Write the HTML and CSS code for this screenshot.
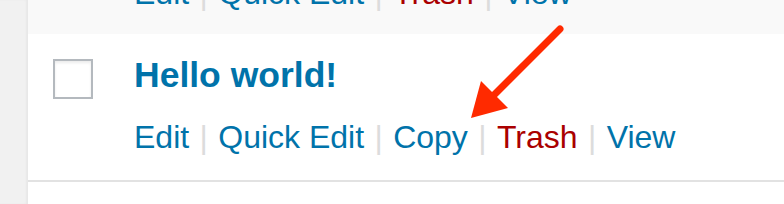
FILE: index.html
```html
<!DOCTYPE html>
<html lang="en">
<head>
  <meta charset="UTF-8" />
  <title>Posts</title>
  <link rel="stylesheet" href="styles.css">
</head>
<body>

<div class="admin-menu"></div>

<div class="posts-table">
  <!-- previous row, mostly scrolled out of view -->
  <div class="post-row post-row-alt">
    <div class="row-actions row-actions-prev">
      <a class="action" href="#">Edit</a><span class="sep"> | </span><a class="action" href="#">Quick Edit</a><span class="sep"> | </span><a class="action trash" href="#">Trash</a><span class="sep"> | </span><a class="action" href="#">View</a>
    </div>
  </div>

  <div class="post-row post-row-main">
    <div class="check-column">
      <span class="checkbox"></span>
    </div>
    <div class="title-column">
      <a class="post-title" href="#">Hello world!</a>
      <div class="row-actions">
        <a class="action" href="#">Edit</a><span class="sep"> | </span><a class="action" href="#">Quick Edit</a><span class="sep"> | </span><a class="action" href="#">Copy</a><span class="sep"> | </span><a class="action trash" href="#">Trash</a><span class="sep"> | </span><a class="action" href="#">View</a>
      </div>
    </div>
  </div>
</div>

<!-- annotation arrow -->
<svg class="arrow" width="784" height="204" viewBox="0 0 784 204">
  <line x1="560" y1="29" x2="493" y2="96" stroke="#ff2a00" stroke-width="7" stroke-linecap="round"/>
  <polygon points="471,118 481,81 508,108" fill="#ff2a00"/>
</svg>

</body>
</html>
```

FILE: styles.css
```css
body {
  font-family: 'Liberation Sans', Arial, sans-serif;
  background-color: #ffffff;
  margin: 0;
  display: flex;
  height: 204px;
  overflow: hidden;
}

.admin-menu {
  width: 28px;
  flex-shrink: 0;
  background-color: #f1f1f1;
  box-shadow: inset -2px 0 2px rgba(0,0,0,0.04);
}

.posts-table {
  flex: 1;
}

.post-row-alt {
  height: 34px;
  background-color: #f9f9f9;
  overflow: hidden;
  padding-left: 106px;
}

.post-row-main {
  display: flex;
  padding: 21px 0 25px 25px;
  border-bottom: 2px solid #e2e2e2;
}

.check-column {
  width: 40px;
  margin-right: 41px;
  padding-top: 4px;
}

.checkbox {
  display: block;
  width: 36px;
  height: 36px;
  border: 2px solid #b4b9be;
  background-color: #fff;
  box-shadow: inset 0 2px 3px rgba(0,0,0,0.08);
}

.post-title {
  display: block;
  font-size: 35.5px;
  line-height: 40px;
  font-weight: bold;
  color: #0073aa;
  text-decoration: none;
}

.row-actions {
  margin-top: 24px;
  font-size: 32px;
  line-height: 36px;
  white-space: nowrap;
}

.row-actions-prev {
  margin-top: -25px;
}

.action {
  color: #0073aa;
  text-decoration: none;
}

.action.trash {
  color: #a00;
}

.sep {
  color: #dcdcdc;
  white-space: pre;
  padding: 0 1.5px;
}

/* 설명용 화살표 */
.arrow {
  position: absolute;
  left: 0;
  top: 0;
  pointer-events: none;
}
```
